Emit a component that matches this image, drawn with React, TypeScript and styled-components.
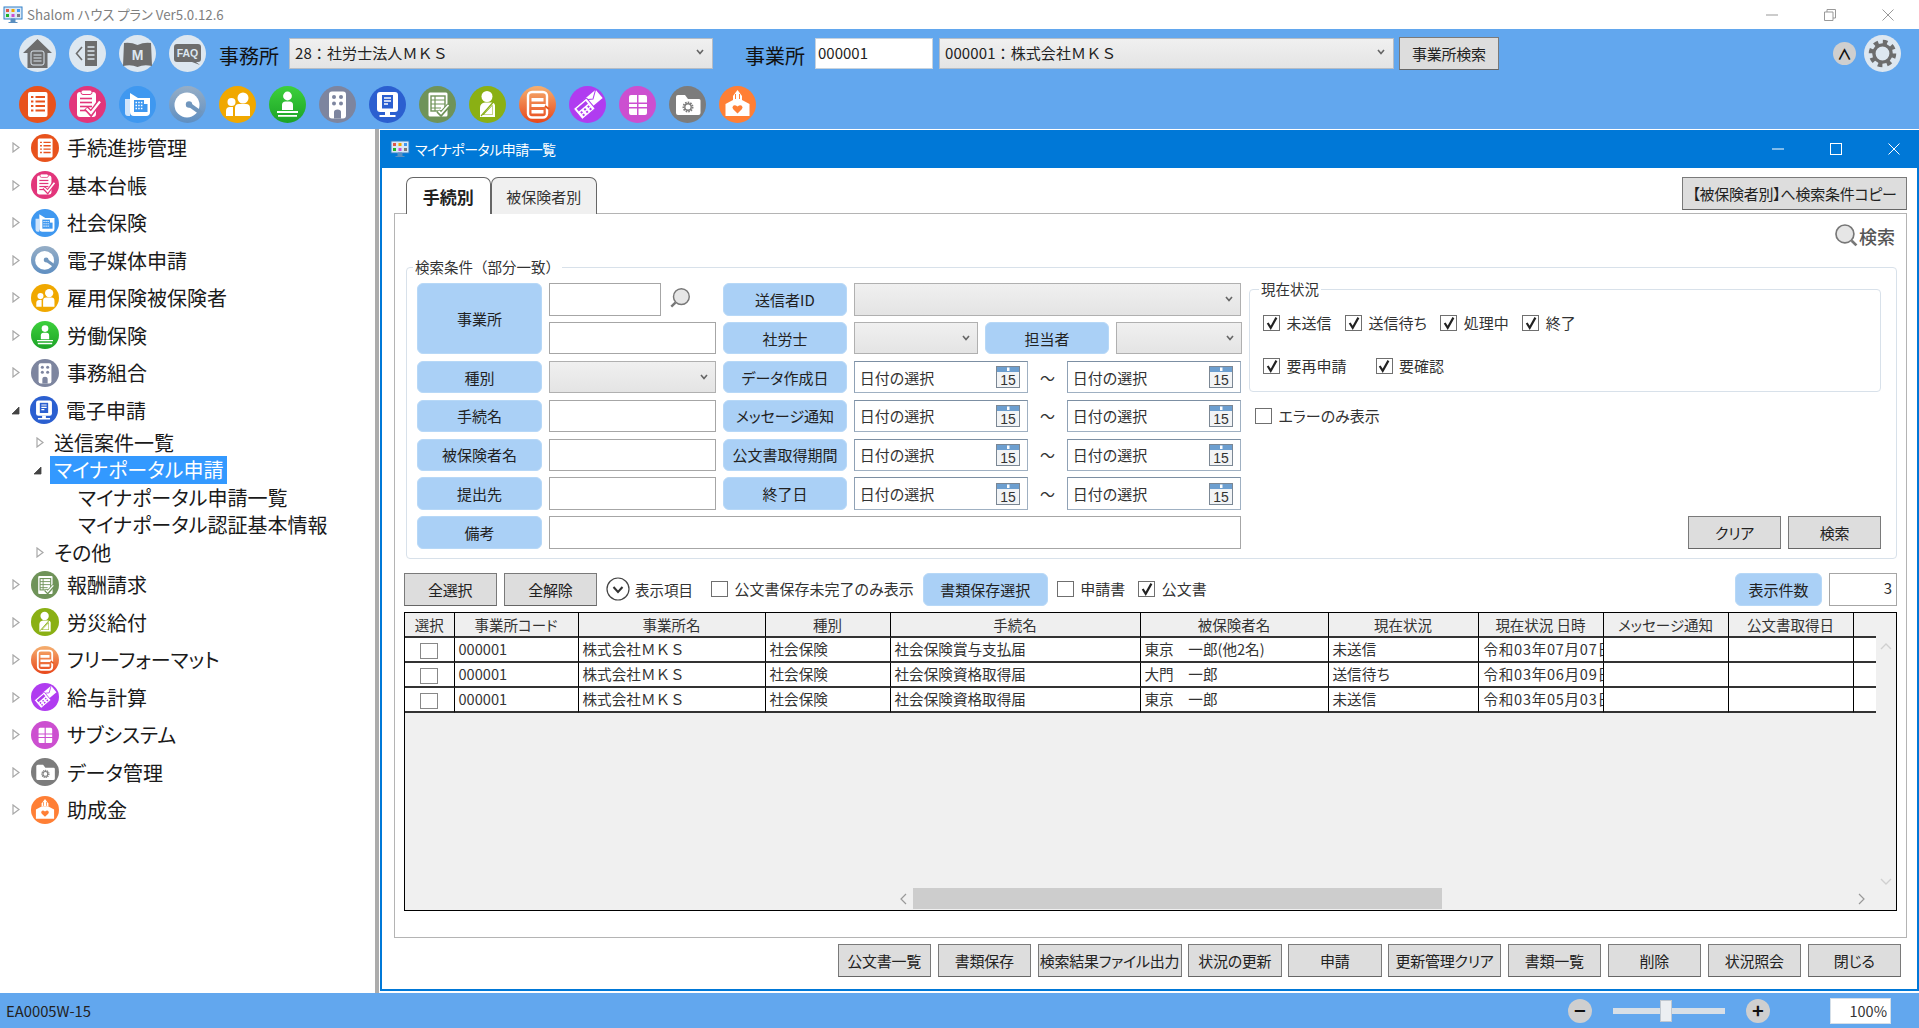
import React from 'react';
import styled, { createGlobalStyle } from 'styled-components';

const Global = createGlobalStyle`
  html, body { margin: 0; padding: 0; background: #fff; }
  body {
    font-family: "Noto Sans CJK JP", "Noto Sans", sans-serif;
    font-feature-settings: "palt";
    color: #222;
    overflow: hidden;
  }
  * { box-sizing: border-box; }
`;

const BLUE = '#62a7ee';

const Page = styled.div`
  width: 1919px; height: 1028px; display: flex; flex-direction: column; overflow: hidden;
`;
const TitleBar = styled.div`
  height: 29px; display: flex; align-items: center; padding: 0 25px 0 3px; background: #fff; flex: none;
`;
const TitleText = styled.span`
  margin-left: 4px; font-size: 13.3px; color: #808080;
`;
const WinControls = styled.div<{ $gap: number }>`
  margin-left: auto; display: flex; align-items: center; gap: ${p => p.$gap}px;
`;
const Header = styled.header`
  background: ${BLUE}; height: 100px; flex: none; padding: 6px 18px 6px 19px; display: flex; flex-direction: column; gap: 14px;
`;
const HeaderRow = styled.div`
  display: flex; align-items: center; height: 37px;
`;
const IconGroup = styled.div`
  display: flex; gap: 13px; flex: none;
`;
const HeadLabel = styled.span<{ $ml: number }>`
  font-size: 20px; margin-left: ${p => p.$ml}px; color: #111; line-height: 37px; padding-top: 3px; flex: none;
`;
const HeadCombo = styled.div<{ $w: number; $ml: number }>`
  width: ${p => p.$w}px; margin-left: ${p => p.$ml}px; height: 31px; flex: none;
  background: linear-gradient(#f0f0f0, #e4e4e4); border: 1.5px solid #b4bcc6;
  display: flex; align-items: center; justify-content: space-between;
  padding: 0 8px 3px 5px; font-size: 15px; font-feature-settings: normal; color: #222; letter-spacing: .1px;
`;
const HeadInput = styled.input`
  width: 118px; height: 31px; margin-left: 10px; flex: none; border: 1.5px solid #c6d2de; background: #fff;
  font: 15px "Noto Sans CJK JP", sans-serif; color: #222; padding: 0 0 2px 2px; outline: none;
`;
const Btn = styled.button<{ $w?: number; $ml?: number; $fs?: number }>`
  ${p => (p.$w ? `width:${p.$w}px;` : '')} height: 33px; flex: none; margin: 0 0 0 ${p => p.$ml || 0}px;
  background: #dddddd; border: 1px solid #7a7a7a; border-bottom-color: #666;
  font-family: inherit; font-feature-settings: "palt"; font-size: ${p => p.$fs || 15}px; color: #222; padding: 0; letter-spacing: -.25px;
  display: inline-flex; align-items: center; justify-content: center; white-space: nowrap; line-height: 1;
`;
const UpButton = styled.div`
  width: 23px; height: 23px; border-radius: 50%; background: #cfcfcf; flex: none; margin-left: auto;
  display: flex; align-items: center; justify-content: center; font-size: 15px; font-weight: 700; color: #111;
`;
const GearWrap = styled.div`
  margin-left: 8px; flex: none; display: flex;
`;

const Body = styled.div`
  flex: 1; min-height: 0; display: flex; background: #fff;
`;
const Sidebar = styled.nav`
  width: 375px; flex: none; background: #fff; overflow: hidden;
`;
const Splitter = styled.div`
  width: 4px; flex: none; margin-right: 1px; background: #acacac;
`;
const TreeRow = styled.div<{ $h: number; $pl: number }>`
  height: ${p => p.$h}px; padding-left: ${p => p.$pl}px; display: flex; align-items: center; white-space: nowrap; font-size: 20px; color: #1a1a1a;
`;
const ArrowSlot = styled.span`
  width: 19px; flex: none; display: flex; align-items: center;
`;
const SmallArrowSlot = styled.span`
  width: 18px; flex: none; display: flex; align-items: center;
`;
const TreeIcon = styled.span`
  display: flex; margin-right: 8px; flex: none;
`;
const TreeText = styled.span<{ $sel?: boolean }>`
  padding: 0 4px; height: 28px; line-height: 27px; margin-left: 8px;
  background: ${p => (p.$sel ? '#3399ff' : 'transparent')}; color: ${p => (p.$sel ? '#fff' : 'inherit')};
`;

const Win = styled.main`
  flex: 1; min-width: 0; margin: 1px 0 2px; border: 2px solid #0078d7; border-top: 0; display: flex; flex-direction: column; background: #fff;
`;
const WinTitle = styled.div`
  height: 38px; background: #0078d7; flex: none; display: flex; align-items: center; padding: 0 17px 0 8px; color: #fff; font-size: 14px;
`;
const WinTitleText = styled.span`
  margin-left: 5px; letter-spacing: -.55px;
`;
const TabRow = styled.div`
  margin: 9px 10px 0 12px; height: 36px; flex: none; display: flex; align-items: flex-start; position: relative; z-index: 1;
`;
const Tabs = styled.div`
  margin-left: 12px; display: flex; align-self: stretch;
`;
const Tab = styled.div<{ $on?: boolean }>`
  width: ${p => (p.$on ? 84.5 : 106.5)}px; height: 37px; border: 1.5px solid #666; border-bottom: 0; border-radius: 7px 7px 0 0;
  background: ${p => (p.$on ? '#fff' : '#f0f0f0')};
  display: flex; align-items: center; justify-content: center;
  font-size: ${p => (p.$on ? 17 : 15)}px; font-weight: ${p => (p.$on ? 700 : 400)}; color: ${p => (p.$on ? '#222' : '#333')};
`;
const CopyBtn = styled(Btn)`
  margin-left: auto; width: 225px; font-size: 15px;
`;
const Panel = styled.section`
  flex: 1; min-height: 0; margin: 0 10px 0 12px; border: 1px solid #b4b4b4; display: flex; flex-direction: column; padding: 0 9px 0 0;
`;
const SearchToggle = styled.div`
  height: 43px; flex: none; display: flex; align-items: center; justify-content: flex-end; gap: 0; color: #555; font-size: 18px; font-weight: 500; padding-right: 2px;
`;
const Field = styled.fieldset`
  margin: 0; min-width: 0; border: 1.5px solid #d8e1ea; border-radius: 4px; 
`;
const OuterField = styled(Field)`
  margin-left: 11px; padding: 2px 9.5px 9px 10px; display: flex; 
`;
const Legend = styled.legend`
  padding: 0 2px; margin-left: -4px; font-size: 14.5px; line-height: 20px; color: #333; font-feature-settings: normal;
`;
const FieldInner = styled.div`
  display: flex; 
`;
const FormGrid = styled.div`
  width: 825px; flex: none; margin-top: 4px;
  display: grid; grid-template-columns: 125px 167.5px 124.5px 387.5px; grid-auto-rows: 32.5px; column-gap: 6.6px; row-gap: 6.4px;
`;
const Label = styled.div<{ $span?: number; $w?: number }>`
  background: #aad0f6; border: 1px solid #b7d8f7; border-radius: 6px; display: flex; align-items: center; justify-content: center;
  font-size: 15px; color: #222; white-space: nowrap;
  ${p => (p.$span ? `grid-row: span ${p.$span};` : '')}
  ${p => (p.$w ? `width:${p.$w}px; flex:none;` : '')}
`;
const TextBox = styled.input<{ $w?: number }>`
  border: 1px solid #a6a6a6; background: #fff; outline: none; min-width: 0; padding: 0 4px; font: 15px "Noto Sans CJK JP", sans-serif; color: #222;
  ${p => (p.$w ? `width:${p.$w}px; flex:none;` : 'width:100%;')} height: 100%;
`;
const WideBox = styled(TextBox)`
  grid-column: 2 / span 3;
`;
const Combo = styled.div<{ $w?: number }>`
  background: linear-gradient(#f0f0f0, #e4e4e4); border: 1px solid #b0b0b0; display: flex; align-items: center; justify-content: flex-end; padding-right: 7px; height: 100%;
  ${p => (p.$w ? `width:${p.$w}px; flex:none;` : '')}
`;
const CellRow = styled.div`
  display: flex; align-items: stretch; height: 100%; gap: 6.6px;
`;
const LensSlot = styled.span`
  display: flex; align-items: center; margin-left: 1.5px; margin-bottom: 3px;
`;
const DateRange = styled.div`
  display: flex; align-items: center; height: 100%;
`;
const DateBox = styled.div`
  width: 174.3px; flex: none; height: 100%; border: 1.5px solid #9fb0c2; border-top-color: #7c8fa3; border-left-color: #8fa1b5; background: #fff;
  display: flex; align-items: center; justify-content: space-between; padding: 0 7px 0 5px; font-size: 15px; color: #333;
`;
const Tilde = styled.span`
  width: 38.7px; flex: none; text-align: center; font-size: 15px; color: #333;
`;
const RightCol = styled.div`
  flex: 1; min-width: 0; margin-left: 7px; display: flex; flex-direction: column;
`;
const StatusField = styled(Field)`
  width: 632px; height: 113px; padding: 16px 0 0 13px; flex: none;
`;
const CheckRows = styled.div`
  display: flex; flex-direction: column; gap: 27px;
`;
const CheckRow = styled.div<{ $gap: number }>`
  display: flex; gap: ${p => p.$gap}px; height: 16px; align-items: center;
`;
const CheckLabel = styled.label<{ $ml?: number }>`
  display: inline-flex; align-items: center; gap: 6.5px; font-size: 15px; color: #333; white-space: nowrap; flex: none; line-height: 16px;
  ${p => (p.$ml ? `margin-left:${p.$ml}px;` : '')}
`;
const Box = styled.span<{ $w?: number }>`
  width: ${p => p.$w || 17}px; height: 16px; border: 1px solid #6f6f6f; background: #fff; flex: none; display: inline-flex; align-items: center; justify-content: center;
`;
const ErrorRow = styled.div`
  margin: 13px 0 0 6px;
`;
const FormButtons = styled.div`
  margin-top: auto; display: flex; justify-content: flex-end; gap: 7px;
`;
const Toolbar = styled.div`
  margin: 14px 0 6px 9px; height: 33px; flex: none; display: flex; align-items: center;
`;
const ShowItems = styled.span`
  margin-left: 9px; display: inline-flex; align-items: center; gap: 5px; font-size: 14.5px; color: #333; flex: none;
`;
const SaveLabel = styled(Label)`
  height: 33px; width: 125px; margin-left: 9px;
`;
const CountLabel = styled(Label)`
  height: 33px; width: 87px; margin-left: auto;
`;
const CountBox = styled.input`
  width: 68px; height: 33px; margin-left: 7px; flex: none; border: 1px solid #a6a6a6; text-align: right; padding: 0 4px 3px 0; font: 15px "Noto Sans CJK JP", sans-serif; color: #333; outline: none;
`;
const TableFrame = styled.div`
  height: 299px; flex: none; margin-left: 9px; border: 1.5px solid #000; background: #f0f0f0; display: flex; flex-direction: column;
`;
const TableMain = styled.div`
  flex: 1; min-height: 0; display: flex;
`;
const TableWrap = styled.div`
  width: 1470.5px; flex: none;
`;
const Grid = styled.table`
  border-collapse: separate; border-spacing: 0; table-layout: fixed; width: 100%;
`;
const Th = styled.th`
  height: 25px; padding: 0 2px; font-weight: 400; font-size: 14.5px; color: #333; background: #efefef; text-align: center;
  border-right: 1px solid #000; border-bottom: 2px solid #333; white-space: nowrap; overflow: hidden;
  &:last-child { border-right: 0; background: transparent; border-bottom-color: #333; }
`;
const Td = styled.td`
  height: 25px; padding: 0 0 1px 4px; font-size: 14.6px; color: #333; background: #fff; white-space: nowrap; overflow: hidden;
  font-feature-settings: normal;
  border-right: 1px solid #000; border-bottom: 2px solid #333; 
  &:last-child { border-right: 0; }
`;
const DateTd = styled(Td)`
  padding-left: 5px; letter-spacing: .7px;
`;
const CheckCell = styled(Td)`
  padding: 0 0 2px; text-align: center; vertical-align: middle;
`;
const RowBox = styled(Box)`
  border-color: #888; vertical-align: middle;
`;
const VScroll = styled.div`
  flex: 1; display: flex; flex-direction: column; align-items: center; justify-content: space-between; padding: 30px 0 3px;
`;
const HScroll = styled.div`
  height: 22px; flex: none; display: flex; align-items: center; padding-right: 22px;
`;
const HThumbTrack = styled.div`
  flex: 1; display: flex; align-items: center; height: 100%; padding-left: 495px;
`;
const HThumb = styled.div`
  width: 529px; height: 21px; background: #cdcdcd; margin-left: 6px;
`;
const HRight = styled.span`
  margin-right: 9px; display: flex;
`;
const Footer = styled.div`
  margin: 6px 16px 12px 0; height: 33px; flex: none; display: flex; justify-content: flex-end; gap: 6.5px;
`;
const StatusBar = styled.footer`
  height: 35px; flex: none; background: ${BLUE}; display: flex; align-items: center; padding: 0 28px 0 6px; font-size: 14.8px; color: #222;
`;
const ZoomGroup = styled.div`
  margin-left: auto; display: flex; align-items: center;
`;
const ZoomBtn = styled.div<{ $ml?: number }>`
  width: 24px; height: 24px; border-radius: 50%; background: #cfcfcf; display: flex; align-items: center; justify-content: center;
  font-size: 20px; font-weight: 700; line-height: 1; color: #111; flex: none; padding-bottom: 2px;
  ${p => (p.$ml ? `margin-left:${p.$ml}px;` : '')}
`;
const SliderTrack = styled.div`
  width: 112px; height: 6px; margin-left: 21px; background: #d8dfe6; position: relative; flex: none;
`;
const SliderThumb = styled.div`
  position: absolute; left: 47px; top: -8px; width: 12px; height: 22px; background: #eceff2; border: 1px solid #c0c8d0;
`;
const ZoomInput = styled.input`
  width: 61px; height: 26px; margin-left: 60px; border: 1px solid #d5dfe8; text-align: right; padding: 0 3px 0 0; font: 14.5px "Noto Sans CJK JP", sans-serif; color: #333; outline: none; flex: none;
`;

/* ---------- drawings ---------- */
const Check = () => (
  <svg width="14" height="14" viewBox="0 0 13 13"><path d="M2.5 6.5L5.3 11 10.6 1.5" fill="none" stroke="#222" strokeWidth="2" /></svg>
);
const Chev = () => (
  <svg width="8" height="6" viewBox="0 0 8 6"><path d="M1 1l3 3.6L7 1" fill="none" stroke="#666" strokeWidth="1.6" /></svg>
);
const Min = ({ c }: { c: string }) => <svg width="12" height="12" viewBox="0 0 12 12"><path d="M0 6h12" stroke={c} strokeWidth="1" /></svg>;
const Max = ({ c }: { c: string }) => <svg width="12" height="12" viewBox="0 0 12 12"><rect x=".5" y=".5" width="11" height="11" fill="none" stroke={c} /></svg>;
const Restore = ({ c }: { c: string }) => <svg width="12" height="12" viewBox="0 0 12 12"><path d="M.5 3h8.5v8.5H.5zM3 3V.5h8.5V9H9" fill="none" stroke={c} /></svg>;
const Close = ({ c }: { c: string }) => <svg width="12" height="12" viewBox="0 0 12 12"><path d="M.5.5l11 11M11.5.5l-11 11" stroke={c} /></svg>;

const AppGlyph = () => (
  <svg width="20" height="18" viewBox="0 0 20 18">
    <rect x="1" y="1" width="18" height="12" fill="#dbe8f5" stroke="#2f7fc8" />
    <rect x="3" y="3" width="3" height="3" fill="#e0584a" /><rect x="8.5" y="3" width="3" height="3" fill="#f0a800" /><rect x="14" y="3" width="3" height="3" fill="#3f98f0" />
    <rect x="3" y="8" width="3" height="3" fill="#1fb52a" /><rect x="8.5" y="8" width="3" height="3" fill="#cc4fd0" /><rect x="14" y="8" width="3" height="3" fill="#7c7c7c" />
    <path d="M8 13h4v3H8zM5.5 16.5h9" fill="#5a8fc0" stroke="#5a8fc0" />
  </svg>
);
const Lens = ({ size, flip }: { size: number; flip?: boolean }) => (
  <svg width={size} height={size} viewBox="0 0 24 24" transform={flip ? 'scale(-1 1)' : undefined}>
    <circle cx="10.5" cy="10.5" r="8.6" fill="#e6e6e6" stroke="#777" strokeWidth="1.6" />
    <path d="M17 17l4.5 4.5" stroke="#777" strokeWidth="2.6" />
  </svg>
);
const Cal = () => (
  <svg width="24" height="22" viewBox="0 0 24 22">
    <rect x=".5" y=".5" width="23" height="21" fill="#f2f4f6" stroke="#7b8794" />
    <rect x="1" y="1" width="22" height="5" fill="#6d9fd0" />
    <rect x="11" y="1.5" width="2.5" height="3.5" fill="#fff" />
    <text x="12" y="18.5" textAnchor="middle" fontSize="14" fontFamily="Liberation Sans, sans-serif" fill="#333">15</text>
  </svg>
);
const ArrowOpen = () => <svg width="8" height="11" viewBox="0 0 8 11"><path d="M1 1l6 4.5L1 10z" fill="#fff" stroke="#a8a8a8" strokeWidth="1.2" /></svg>;
const ArrowDown = () => <svg width="9" height="9" viewBox="0 0 9 9"><path d="M8 1v7H1z" fill="#444" stroke="#444" strokeWidth=".8" /></svg>;

const W = '#fff';
type IconDef = { bg: string; grad?: [string, string]; draw: (c: string) => React.ReactNode };
const ICONS: Record<string, IconDef> = {
  proc: { bg: '#e8521c', draw: c => (<>
    <rect x="9" y="6" width="19.5" height="25" rx="2" fill={W} />
    {[11, 15.5, 20, 24.5].map(y => <path key={y} d={`M12 ${y}h2.4M16.5 ${y}H26`} stroke={c} strokeWidth="1.8" />)}
  </>) },
  ledger: { bg: '#e2357b', draw: c => (<>
    <rect x="8" y="6" width="19" height="25" rx="3" fill={W} />
    <rect x="12" y="4" width="11" height="4.5" rx="2" fill={W} stroke={c} strokeWidth="1" />
    {[12.5, 16.5, 20.5, 24.5].map(y => <path key={y} d={`M11 ${y}h12`} stroke={c} strokeWidth="1.6" />)}
    <path d="M17 22l5 5.5L31 15" fill="none" stroke={c} strokeWidth="5" />
    <path d="M17.5 22.5l4.5 4.5L31 15.5" fill="none" stroke={W} strokeWidth="2.2" />
  </>) },
  shaho: { bg: '#3f98f0', draw: c => (<>
    <path d="M6 13h5v17H9q-3 0-3-3z" fill="#cfe4fb" />
    <path d="M11 7l8 5h12v14q0 4-4 4H15q-4 0-4-4z" fill={W} />
    <rect x="15" y="14" width="10" height="12" fill={c} /><rect x="25" y="18" width="3.5" height="8" fill={c} />
    {[16.5, 19.5, 22.5].map(y => <path key={y} d={`M16.5 ${y}h7`} stroke={W} strokeWidth="1.6" strokeDasharray="1.5 1.2" />)}
  </>) },
  disc: { bg: '#7a9cc0', grad: ['#96aec6', '#5f8fc2'], draw: () => (<>
    <circle cx="18" cy="19" r="12.5" fill={W} />
    <path d="M20 18.5L32 27" stroke="#7096bd" strokeWidth="4" />
    <circle cx="20" cy="18.5" r="3.2" fill="#7096bd" />
  </>) },
  people: { bg: '#f0a800', draw: () => (<>
    <circle cx="12.5" cy="16" r="4" fill={W} /><circle cx="24" cy="12" r="5.5" fill={W} />
    <path d="M7 30v-5q0-4 4-4h3v9zM16 30v-8q0-4 4-4h7q4 0 4 4v8z" fill={W} />
  </>) },
  worker: { bg: '#1fb52a', grad: ['#3dd03c', '#1ca326'], draw: () => (<>
    <circle cx="18.5" cy="10" r="4.4" fill={W} />
    <path d="M13 24v-5q0-3.5 3.5-3.5h4q3.5 0 3.5 3.5v5z" fill={W} />
    <path d="M8 26h21M9 29.8h19" stroke={W} strokeWidth="1.8" />
  </>) },
  office: { bg: '#7d859f', draw: c => (<>
    <rect x="10" y="5.5" width="17" height="27" rx="3" fill={W} />
    {[11, 17.5].map(y => [15, 22].map(x => <circle key={`${x}${y}`} cx={x} cy={y} r="2" fill={c} />))}
    <path d="M15 32.5V26q0-2.5 3.5-2.5T22 26v6.5z" fill={c} />
  </>) },
  monitor: { bg: '#2b5fd0', draw: c => (<>
    <rect x="8" y="6" width="21" height="20" rx="3" fill={W} />
    <path d="M13 9h11v13.5H13z" fill={c} />
    <path d="M15 12h7M15 15h7M15 18h4" stroke={W} strokeWidth="1.4" />
    <path d="M16 26h5v3h-5zM10.5 29h16v2h-16z" fill={W} />
  </>) },
  form: { bg: '#6f9359', draw: c => (<>
    <rect x="9.5" y="6.5" width="19" height="24" rx="1.5" fill={W} />
    <rect x="12" y="10" width="14" height="15" fill="none" stroke={c} strokeWidth="1.4" />
    <path d="M12 14h14M12 18h14M12 22h10M16 10v15" stroke={c} strokeWidth="1.2" />
    <path d="M19 25l3 3 8-9" fill="none" stroke={c} strokeWidth="4.5" />
    <path d="M19.5 25l2.5 2.5 7.5-8.5" fill="none" stroke={W} strokeWidth="1.8" />
  </>) },
  sling: { bg: '#8ab014', draw: c => (<>
    <circle cx="18" cy="10.5" r="5.5" fill={W} />
    <path d="M11 31v-9q0-5 5-5.5h7q2.500 0 3 2.500V31z" fill={W} />
    <path d="M13.500 29L23.500 18.500V29z" fill={c} />
    <path d="M15 28.500L23 20V28.500z" fill={W} />
    <path d="M27 13L12 30" stroke={c} strokeWidth="1.2" />
  </>) },
  free: { bg: '#e8571c', grad: ['#f5b070', '#e8461a'], draw: c => (<>
    <rect x="9" y="6" width="19" height="25.500" rx="4" fill="none" stroke={W} strokeWidth="2.4" />
    <path d="M12.500 12h12v3.500h-12zM12.500 18h14v3h-14zM12.500 24h12v3.500h-12z" fill={W} />
    <path d="M26 20l4 3" stroke={c} strokeWidth="2" />
  </>) },
  calc: { bg: '#b03cf0', draw: c => (<>
    <g transform="rotate(-40 24 13)"><rect x="16" y="7.500" width="16" height="11" fill={W} /><path d="M16 7.500l8 5.500 8-5.500" fill="none" stroke={c} strokeWidth="1" /></g>
    <g transform="rotate(-40 15 23)">
      <rect x="7" y="16" width="17" height="14" rx="1" fill={W} stroke={c} strokeWidth="1" />
      <rect x="9.500" y="18" width="12" height="3.500" fill={c} />
      {[23, 26.200].map(y => [10, 14.500, 19].map(x => <rect key={`${x}${y}`} x={x} y={y} width="2" height="2" fill={c} />))}
    </g>
  </>) },
  sub: { bg: '#cc4fd0', draw: () => (<>
    <path d="M12 9h6v7.500h-8V11q0-2 2-2zM19.500 9H26q2 0 2 2v5.500h-8.500zM10 18h8v3h-8zM19.500 18H28v3h-8.500zM10 22.500h8V29h-6q-2 0-2-2zM19.500 22.500H28V27q0 2-2 2h-6.500z" fill={W} />
  </>) },
  data: { bg: '#7c7c7c', draw: c => (<>
    <path d="M7 11q0-2 2-2h7l3 4h11q1.500 0 1.500 1.500V27q0 2-2 2H9q-2 0-2-2z" fill={W} />
    <circle cx="19" cy="21" r="4.600" fill="none" stroke={c} strokeWidth="1.800" strokeDasharray="1.600 1" />
    <circle cx="19" cy="21" r="3.200" fill="none" stroke={c} strokeWidth="1.400" />
  </>) },
  grant: { bg: '#ff7f35', draw: c => (<>
    <path d="M18.500 4l4.500 6v4h-9v-4z" fill={W} />
    <path d="M16.500 8v5M20.500 8v5" stroke={c} strokeWidth="1" />
    <path d="M14 14h9l7.500 4v12h-24V18z" fill={W} />
    <path d="M18.500 27.500l-4.300-4.200q-1.600-2 0-3.500t4.300.8q2.700-2.300 4.300-.8t0 3.500z" fill={c} />
  </>) },
  home: { bg: '#dde7f0', draw: () => (<>
    <path d="M18.500 4L33 18h-4.500v15h-20V18H4z" fill="#6d6d6d" />
    <rect x="12" y="16" width="13" height="14" rx="2" fill="#6d6d6d" stroke="#dde7f0" strokeWidth="1" />
    <path d="M14.500 20h8M14.500 23h8M14.500 26h8" stroke="#dde7f0" strokeWidth="1.200" />
  </>) },
  back: { bg: '#dde7f0', draw: () => (<>
    <path d="M13 12l-5.500 6.500L13 25" fill="none" stroke="#6d6d6d" strokeWidth="1.600" />
    <rect x="16" y="6" width="12" height="25" fill="#6d6d6d" />
    <path d="M18.500 12h7M18.500 16h7M18.500 20h7M18.500 24h7" stroke="#dde7f0" strokeWidth="1.500" />
  </>) },
  manual: { bg: '#dde7f0', draw: () => (<>
    <path d="M5 8q7-1 13.500 2Q25 7 32 8l1 23q-8-2-14.500 1Q12 29 4 31z" fill="#6d6d6d" />
    <text x="18.500" y="25" textAnchor="middle" fontSize="14" fontWeight="700" fontFamily="Liberation Sans, sans-serif" fill="#dde7f0">M</text>
  </>) },
  faq: { bg: '#dde7f0', draw: () => (<>
    <path d="M8 9h21q3 0 3 3v12q0 3-3 3h-2l4 3-8-3H8q-3 0-3-3V12q0-3 3-3z" fill="#6d6d6d" />
    <text x="18.500" y="22" textAnchor="middle" fontSize="10.500" fontWeight="700" fontFamily="Liberation Sans, sans-serif" fill="#dde7f0">FAQ</text>
  </>) },
  gear: { bg: '#dde7f0', draw: () => (<>
    <circle cx="18.500" cy="18.500" r="11.500" fill="none" stroke="#6d6d6d" strokeWidth="4.500" strokeDasharray="4.500 4.530" />
    <circle cx="18.500" cy="18.500" r="8.600" fill="none" stroke="#6d6d6d" strokeWidth="3.400" />
  </>) },
};
const Icon = ({ name, size = 37 }: { name: string; size?: number }) => {
  const d = ICONS[name];
  const id = `g-${name}-${size}`;
  return (
    <svg width={size} height={size} viewBox="0 0 37 37">
      {d.grad && (
        <defs>
          <linearGradient id={id} x1="0" y1="0" x2="0" y2="1">
            <stop offset="0" stopColor={d.grad[0]} /><stop offset="1" stopColor={d.grad[1]} />
          </linearGradient>
        </defs>
      )}
      <circle cx="18.5" cy="18.5" r="18.5" fill={d.grad ? `url(#${id})` : d.bg} />
      {d.draw(d.bg)}
    </svg>
  );
};

/* ---------- data ---------- */
const QUICK = ['proc', 'ledger', 'shaho', 'disc', 'people', 'worker', 'office', 'monitor', 'form', 'sling', 'free', 'calc', 'sub', 'data', 'grant'];
const TOP_TREE: [string, string][] = [
  ['proc', '手続進捗管理'], ['ledger', '基本台帳'], ['shaho', '社会保険'], ['disc', '電子媒体申請'],
  ['people', '雇用保険被保険者'], ['worker', '労働保険'], ['office', '事務組合'],
];
const BOTTOM_TREE: [string, string][] = [
  ['form', '報酬請求'], ['sling', '労災給付'], ['free', 'フリーフォーマット'], ['calc', '給与計算'],
  ['sub', 'サブシステム'], ['data', 'データ管理'], ['grant', '助成金'],
];
const COLS = [49.5, 124, 187, 125, 250, 188, 150, 125, 125, 125, 22];
const HEADS = ['選択', '事業所コード', '事業所名', '種別', '手続名', '被保険者名', '現在状況', '現在状況 日時', 'メッセージ通知', '公文書取得日', ''];
const ROWS = [
  ['000001', '株式会社ＭＫＳ', '社会保険', '社会保険賞与支払届', '東京　一郎(他2名)', '未送信', '令和03年07月07日'],
  ['000001', '株式会社ＭＫＳ', '社会保険', '社会保険資格取得届', '大門　一郎', '送信待ち', '令和03年06月09日'],
  ['000001', '株式会社ＭＫＳ', '社会保険', '社会保険資格取得届', '東京　一郎', '未送信', '令和03年05月03日'],
];
const FOOT: [string, number][] = [
  ['公文書一覧', 93.5], ['書類保存', 93.5], ['検索結果ファイル出力', 144], ['状況の更新', 93.5], ['申請', 93.5],
  ['更新管理クリア', 113], ['書類一覧', 93.5], ['削除', 93.5], ['状況照会', 93.5], ['閉じる', 93.5],
];

const CheckItem = ({ text, on, ml }: { text: string; on?: boolean; ml?: number }) => (
  <CheckLabel $ml={ml}><Box>{on && <Check />}</Box>{text}</CheckLabel>
);
const DateSel = () => (<DateBox>日付の選択<Cal /></DateBox>);
const Dates = () => (<DateRange><DateSel /><Tilde>～</Tilde><DateSel /></DateRange>);
const TopItem = ({ icon, text }: { icon: string; text: string }) => (
  <TreeRow $h={37.5} $pl={12}>
    <ArrowSlot><ArrowOpen /></ArrowSlot>
    <TreeIcon><Icon name={icon} size={28} /></TreeIcon>
    {text}
  </TreeRow>
);

export default function App() {
  return (
    <Page>
      <Global />
      <TitleBar>
        <AppGlyph />
        <TitleText>Shalom ハウス プラン Ver5.0.12.6</TitleText>
        <WinControls $gap={46}><Min c="#999" /><Restore c="#999" /><Close c="#999" /></WinControls>
      </TitleBar>
      <Header>
        <HeaderRow>
          <IconGroup>{['home', 'back', 'manual', 'faq'].map(n => <Icon key={n} name={n} />)}</IconGroup>
          <HeadLabel $ml={13}>事務所</HeadLabel>
          <HeadCombo $w={424} $ml={10}>28：社労士法人ＭＫＳ<Chev /></HeadCombo>
          <HeadLabel $ml={32}>事業所</HeadLabel>
          <HeadInput readOnly value="000001" />
          <HeadCombo $w={455} $ml={6}>000001：株式会社ＭＫＳ<Chev /></HeadCombo>
          <Btn $w={100} $ml={5}>事業所検索</Btn>
          <UpButton>∧</UpButton>
          <GearWrap><Icon name="gear" /></GearWrap>
        </HeaderRow>
        <HeaderRow>
          <IconGroup>{QUICK.map(n => <Icon key={n} name={n} />)}</IconGroup>
        </HeaderRow>
      </Header>
      <Body>
        <Sidebar>
          {TOP_TREE.map(([i, t]) => <TopItem key={t} icon={i} text={t} />)}
          <TreeRow $h={37.5} $pl={11}>
            <ArrowSlot><ArrowDown /></ArrowSlot>
            <TreeIcon><Icon name="monitor" size={28} /></TreeIcon>
            電子申請
          </TreeRow>
          <TreeRow $h={27.4} $pl={36}><SmallArrowSlot><ArrowOpen /></SmallArrowSlot>送信案件一覧</TreeRow>
          <TreeRow $h={27.4} $pl={33}><ArrowDown /><TreeText $sel>マイナポータル申請</TreeText></TreeRow>
          <TreeRow $h={27.4} $pl={78}>マイナポータル申請一覧</TreeRow>
          <TreeRow $h={27.4} $pl={78}>マイナポータル認証基本情報</TreeRow>
          <TreeRow $h={27.4} $pl={36}><SmallArrowSlot><ArrowOpen /></SmallArrowSlot>その他</TreeRow>
          {BOTTOM_TREE.map(([i, t]) => <TopItem key={t} icon={i} text={t} />)}
        </Sidebar>
        <Splitter />
        <Win>
          <WinTitle>
            <AppGlyph />
            <WinTitleText>マイナポータル申請一覧</WinTitleText>
            <WinControls $gap={46}><Min c="#fff" /><Max c="#fff" /><Close c="#fff" /></WinControls>
          </WinTitle>
          <TabRow>
            <Tabs><Tab $on>手続別</Tab><Tab>被保険者別</Tab></Tabs>
            <CopyBtn>【被保険者別】へ検索条件コピー</CopyBtn>
          </TabRow>
          <Panel>
            <SearchToggle><Lens size={25} />検索</SearchToggle>
            <OuterField>
              <Legend>検索条件（部分一致）</Legend>
              <FieldInner>
                <FormGrid>
                  <Label $span={2}>事業所</Label>
                  <CellRow><TextBox $w={112} readOnly /><LensSlot><Lens size={22} flip /></LensSlot></CellRow>
                  <Label>送信者ID</Label>
                  <Combo><Chev /></Combo>

                  <TextBox readOnly />
                  <Label>社労士</Label>
                  <CellRow>
                    <Combo $w={124.4}><Chev /></Combo>
                    <Label $w={124.6}>担当者</Label>
                    <Combo $w={125.6}><Chev /></Combo>
                  </CellRow>

                  <Label>種別</Label>
                  <Combo><Chev /></Combo>
                  <Label>データ作成日</Label>
                  <Dates />

                  <Label>手続名</Label>
                  <TextBox readOnly />
                  <Label>メッセージ通知</Label>
                  <Dates />

                  <Label>被保険者名</Label>
                  <TextBox readOnly />
                  <Label>公文書取得期間</Label>
                  <Dates />

                  <Label>提出先</Label>
                  <TextBox readOnly />
                  <Label>終了日</Label>
                  <Dates />

                  <Label>備考</Label>
                  <WideBox readOnly />
                </FormGrid>
                <RightCol>
                  <StatusField>
                    <Legend>現在状況</Legend>
                    <CheckRows>
                      <CheckRow $gap={13.5}>
                        <CheckItem on text="未送信" /><CheckItem on text="送信待ち" /><CheckItem on text="処理中" /><CheckItem on text="終了" />
                      </CheckRow>
                      <CheckRow $gap={29}>
                        <CheckItem on text="要再申請" /><CheckItem on text="要確認" />
                      </CheckRow>
                    </CheckRows>
                  </StatusField>
                  <ErrorRow><CheckItem text="エラーのみ表示" /></ErrorRow>
                  <FormButtons><Btn $w={93}>クリア</Btn><Btn $w={93}>検索</Btn></FormButtons>
                </RightCol>
              </FieldInner>
            </OuterField>
            <Toolbar>
              <Btn $w={92.5}>全選択</Btn>
              <Btn $w={93} $ml={7.5}>全解除</Btn>
              <ShowItems>
                <svg width="24" height="24" viewBox="0 0 24 24"><circle cx="12" cy="12" r="11" fill="#fff" stroke="#444" strokeWidth="1.2" /><path d="M7.5 10l4.5 5 4.5-5" fill="none" stroke="#333" strokeWidth="2" /></svg>
                表示項目
              </ShowItems>
              <CheckItem ml={18} text="公文書保存未完了のみ表示" />
              <SaveLabel>書類保存選択</SaveLabel>
              <CheckItem ml={9} text="申請書" />
              <CheckItem ml={13} on text="公文書" />
              <CountLabel>表示件数</CountLabel>
              <CountBox readOnly value="3" />
            </Toolbar>
            <TableFrame>
              <TableMain>
                <TableWrap>
                  <Grid>
                    <colgroup>{COLS.map((w, i) => <col key={i} style={{ width: w }} />)}</colgroup>
                    <thead><tr>{HEADS.map((h, i) => <Th key={i}>{h}</Th>)}</tr></thead>
                    <tbody>
                      {ROWS.map((r, i) => (
                        <tr key={i}>
                          <CheckCell><RowBox $w={18} /></CheckCell>
                          {r.map((c, j) => (j === 6 ? <DateTd key={j}>{c}</DateTd> : <Td key={j}>{c}</Td>))}
                          <Td /><Td /><Td />
                        </tr>
                      ))}
                    </tbody>
                  </Grid>
                </TableWrap>
                <VScroll>
                  <svg width="12" height="7" viewBox="0 0 12 7"><path d="M1 6l5-5 5 5" fill="none" stroke="#d0d0d0" strokeWidth="1.4" /></svg>
                  <svg width="12" height="7" viewBox="0 0 12 7"><path d="M1 1l5 5 5-5" fill="none" stroke="#d0d0d0" strokeWidth="1.4" /></svg>
                </VScroll>
              </TableMain>
              <HScroll>
                <HThumbTrack>
                  <svg width="7" height="12" viewBox="0 0 7 12"><path d="M6 1L1 6l5 5" fill="none" stroke="#999" strokeWidth="1.2" /></svg>
                  <HThumb />
                </HThumbTrack>
                <HRight><svg width="7" height="12" viewBox="0 0 7 12"><path d="M1 1l5 5-5 5" fill="none" stroke="#999" strokeWidth="1.2" /></svg></HRight>
              </HScroll>
            </TableFrame>
          </Panel>
          <Footer>{FOOT.map(([t, w]) => <Btn key={t} $w={w}>{t}</Btn>)}</Footer>
        </Win>
      </Body>
      <StatusBar>
        EA0005W-15
        <ZoomGroup>
          <ZoomBtn>−</ZoomBtn>
          <SliderTrack><SliderThumb /></SliderTrack>
          <ZoomBtn $ml={21}>+</ZoomBtn>
          <ZoomInput readOnly value="100%" />
        </ZoomGroup>
      </StatusBar>
    </Page>
  );
}
